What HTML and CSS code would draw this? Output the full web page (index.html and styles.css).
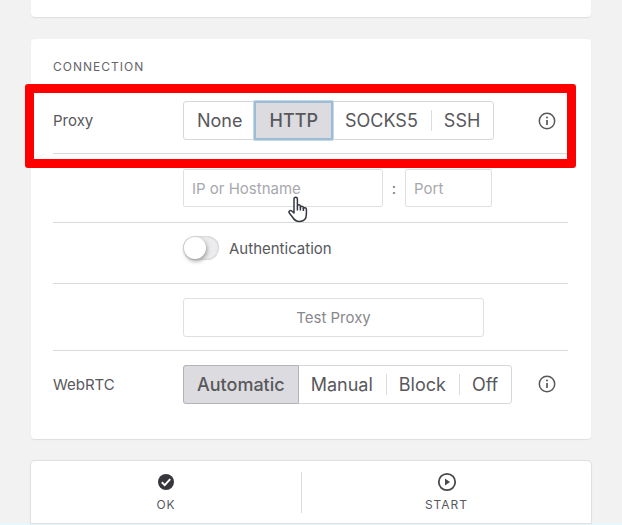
FILE: index.html
```html
<!DOCTYPE html>
<html lang="en">
<head>
    <meta charset="utf-8">
    <title>Connection</title>
    <link rel="stylesheet" href="styles.css">
</head>
<body>
    <main class="page">
        <section class="card card-prev"></section>
        <section class="card connection">
            <h2>CONNECTION</h2>
            <div class="row row-proxy">
                <span class="label" id="proxyLabel">Proxy</span>
                <div class="segments" role="group" aria-labelledby="proxyLabel">
                    <button type="button">None</button>
                    <button type="button" class="selected focused" aria-pressed="true">HTTP</button>
                    <button type="button">SOCKS5</button>
                    <button type="button">SSH</button>
                </div>
                <button type="button" class="info" aria-label="Proxy info">
                    <svg width="18" height="18" viewBox="0 0 18 18" fill="none" stroke="currentColor"><circle cx="9" cy="9" r="7.7" stroke-width="1.5"/><path d="M9 8v5" stroke-width="1.7"/><circle cx="9" cy="5.6" r="1" fill="currentColor" stroke="none"/></svg>
                </button>
                <div class="highlight"></div>
            </div>
            <div class="row row-host">
                <div class="host">
                    <input type="text" class="ip" placeholder="IP or Hostname" aria-label="IP or Hostname">
                    <span class="colon">:</span>
                    <input type="text" class="port" placeholder="Port" aria-label="Port">
                    <svg class="pointer" width="20" height="27" viewBox="0 0 20 27"><path d="M6 15V3.2C6 .6 9.4.6 9.4 3.2V10c.3-1.7 3-1.5 3 .4v.8c.4-1.5 3-1.3 3 .6v.8c.5-1.3 3-1 3 .9V18c0 5-2.5 7.5-7 7.5-4 0-5.5-2-7-4.5L1.3 17c-1-1.8 1-3.2 2.5-2L6 17z" fill="#fff" stroke="#343840" stroke-width="1.5" stroke-linejoin="round"/><path d="M9.4 10v4.5M12.4 11v3.5M15.4 12v3" stroke="#343840" stroke-width="1.5" fill="none"/></svg>
                </div>
            </div>
            <div class="row row-auth">
                <label class="switch">
                    <input type="checkbox">
                    <span>Authentication</span>
                </label>
            </div>
            <div class="row row-test">
                <button type="button" class="test">Test Proxy</button>
            </div>
            <div class="row row-webrtc">
                <span class="label" id="webrtcLabel">WebRTC</span>
                <div class="segments" role="group" aria-labelledby="webrtcLabel">
                    <button type="button" class="selected" aria-pressed="true">Automatic</button>
                    <button type="button">Manual</button>
                    <button type="button">Block</button>
                    <button type="button">Off</button>
                </div>
                <button type="button" class="info" aria-label="WebRTC info">
                    <svg width="18" height="18" viewBox="0 0 18 18" fill="none" stroke="currentColor"><circle cx="9" cy="9" r="7.7" stroke-width="1.5"/><path d="M9 8v5" stroke-width="1.7"/><circle cx="9" cy="5.6" r="1" fill="currentColor" stroke="none"/></svg>
                </button>
            </div>
        </section>
        <footer class="card actions">
            <button type="button">
                <svg width="20" height="20" viewBox="0 0 20 20"><circle cx="10" cy="10" r="8" fill="#36363c"/><path d="M5.8 10.3l2.9 2.8 5.5-6" fill="none" stroke="#fff" stroke-width="2"/></svg>
                OK
            </button>
            <button type="button">
                <svg width="20" height="20" viewBox="0 0 20 20"><circle cx="10" cy="10" r="8.2" fill="none" stroke="#48484d" stroke-width="1.8"/><path d="M8 6.6v6.8l5-3.4z" fill="#48484d"/></svg>
                START
            </button>
        </footer>
    </main>
    <div class="strip"></div>
</body>
</html>
```

FILE: styles.css
```css
* { box-sizing: border-box; }
body { margin: 0; background: #f2f2f2; color: #58585c; font-family: Inter, "Liberation Sans", sans-serif; font-size: 15px; }
button, input { font: inherit; color: inherit; }
button { background: none; border: none; padding: 0; cursor: pointer; }

.page { display: flex; flex-direction: column; gap: 22px; padding: 0 31px; }
.card { background: #fff; border-radius: 4px; box-shadow: 0 1px 1px #dedee0; }
.card-prev { height: 17px; border-radius: 0 0 4px 4px; }
.connection { padding: 20px 23px 22px 22px; }
h2 { margin: 0; font-size: 12px; line-height: 16px; font-weight: 400; letter-spacing: 1px; color: #66666a; }

.row { display: grid; grid-template-columns: 130px 1fr auto; align-items: center; height: 67px; border-bottom: 1px solid #dadadd; }
.row > :first-child:not(.label) { grid-column: 2 / 4; }
.row-proxy { position: relative; height: 79px; padding-top: 13px; }
.row-host { height: 69px; }
.row-auth { height: 61px; padding-bottom: 10px; }
.row-webrtc { height: 66px; border-bottom: none; }

/* segmented buttons */
.segments { display: flex; justify-self: start; height: 39px; border: 1px solid #d8d8db; border-radius: 3px; }
.segments button { position: relative; padding: 0 13px; font-size: 18px; white-space: nowrap; }
.segments button + button:not(.selected)::before { content: ""; position: absolute; left: 0; top: 8px; bottom: 8px; border-left: 1px solid #dcdcdf; }
.segments .selected { background: #dcdce0; margin: -1px; border: 1px solid #b4b4b8; border-radius: 3px 0 0 3px; font-weight: 500; }
.segments .focused { border: 2px solid #9dbcd6; border-radius: 1px; box-shadow: 0 0 0 1px #c5d8e7; }
.segments .selected + button::before { display: none; }

.info { display: flex; margin-right: 12px; }

.host { position: relative; display: flex; align-items: center; }
.host input { height: 38px; padding: 0 8px; background: #fff; border: 1px solid #e0e0e2; border-radius: 2px; min-width: 0; }
.host input::placeholder { color: #a8a8ac; opacity: 1; }
.host .ip { width: 200px; }
.host .port { width: 87px; }
.colon { width: 22px; text-align: center; color: #77777b; }
.pointer { position: absolute; left: 105px; top: 27px; }

.switch { display: flex; align-items: center; gap: 10px; }
.switch input { appearance: none; display: flex; width: 36px; height: 24px; margin: 0; border-radius: 12px; background: #ececee; box-shadow: inset 0 0 2px #aaa; }
.switch input::before { content: ""; width: 22px; height: 22px; margin: 1px; border-radius: 50%; background: #fff; box-shadow: 1px 2px 4px #999; }

.test { justify-self: start; width: 301px; max-width: 100%; height: 39px; border: 1px solid #e0e0e2; border-radius: 3px; color: #88888c; }

/* red marker round the proxy row */
.highlight { position: absolute; top: 9px; right: -8px; bottom: -15px; left: -28px; border: 9px solid #f00; border-radius: 3px; pointer-events: none; z-index: 1; }

.actions { display: grid; grid-template-columns: 27fr 29fr; height: 62px; box-shadow: 0 0 1px 1px #dedee0; border-radius: 4px 4px 0 0; padding: 11px 0 12px; }
.actions button { display: flex; flex-direction: column; align-items: center; gap: 5px; font-size: 12px; line-height: 16px; letter-spacing: 1px; }
.actions button + button { border-left: 1px solid #dcdcdf; }
.strip { height: 2px; background: #e5f8fd; }
```
